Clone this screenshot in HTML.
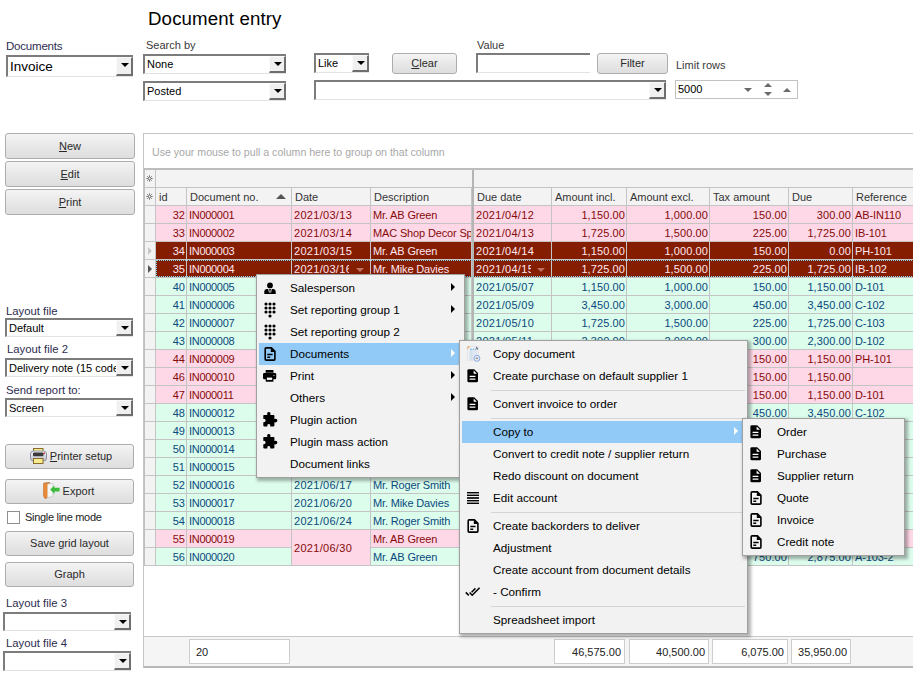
<!DOCTYPE html><html><head><meta charset="utf-8"><style>
*{margin:0;padding:0;box-sizing:border-box}
html,body{width:913px;height:675px;overflow:hidden;background:#fff;font-family:"Liberation Sans",sans-serif;position:relative}
.a{position:absolute;white-space:nowrap}
.lbl{position:absolute;white-space:nowrap;font-size:11px;color:#3a3a3a;line-height:13px}
.lblb{position:absolute;white-space:nowrap;font-size:11.3px;color:#2c2c50;line-height:14px}
.combo{position:absolute;background:#fff;border-top:2px solid #7c7c7c;border-left:2px solid #7c7c7c;border-bottom:1px solid #e3e3e3;border-right:0;font-size:11px;color:#000;padding-left:2px;overflow:hidden;white-space:nowrap}
.dd{position:absolute;top:0;right:0;width:17px;bottom:0;background:#f0f0f0;border-left:1px solid #fafafa;border-top:1px solid #fafafa;border-right:2px solid #6e6e6e;border-bottom:2px solid #6e6e6e}
.dd:after{content:"";position:absolute;left:4px;top:5px;border-left:4px solid transparent;border-right:4px solid transparent;border-top:4px solid #000}
.btn{position:absolute;border:1px solid #adadad;border-radius:3px;background:linear-gradient(#f4f4f4,#e8e8e8 50%,#dedede);font-size:11px;color:#2a2a2a;text-align:center;white-space:nowrap}
.g{position:absolute;overflow:hidden;white-space:nowrap;font-size:11px;line-height:20px;border-right:1px solid #c4c4c4;border-bottom:1px solid #c4c4c4;padding:0 1px 0 2px}
.r{text-align:right}
.menu{position:absolute;background:#f2f2f2;border:1px solid #a0a0a0;box-shadow:2px 2px 3px 1px rgba(0,0,0,0.30)}
.mi{position:absolute;height:22px;line-height:21px;font-size:11.7px;color:#000;white-space:nowrap}
.hl{position:absolute;background:#91c9f7}
.sep{position:absolute;height:1px;background:#d5d5d5}
.arr{position:absolute;border-top:4px solid transparent;border-bottom:4px solid transparent;border-left:4px solid #000}
u{text-decoration:underline}
</style></head><body>
<div class="a" style="left:148px;top:7.5px;font-size:18.7px;letter-spacing:0.12px;line-height:22px;color:#000">Document entry</div>
<div class="lblb" style="left:6px;top:39px;font-size:11.5px;letter-spacing:-0.2px">Documents</div>
<div class="combo" style="left:6px;top:55px;width:127px;height:22px;font-size:13.5px;line-height:20px">Invoice<div class="dd"></div></div>
<div class="lbl" style="left:146px;top:39px">Search by</div>
<div class="combo" style="left:143px;top:54px;width:143px;height:20px;font-size:11px;line-height:17px">None<div class="dd"></div></div>
<div class="combo" style="left:143px;top:81px;width:143px;height:20px;font-size:11px;line-height:17px">Posted<div class="dd"></div></div>
<div class="combo" style="left:314px;top:53px;width:55px;height:20px;font-size:11px;line-height:17px">Like<div class="dd"></div></div>
<div class="btn" style="left:392px;top:53px;width:65px;height:21px;line-height:19px"><u>C</u>lear</div>
<div class="lbl" style="left:477px;top:39px">Value</div>
<div class="combo" style="left:476px;top:53px;width:114px;height:20px"></div>
<div class="btn" style="left:597px;top:53px;width:71px;height:21px;line-height:19px">Filter</div>
<div class="combo" style="left:314px;top:80px;width:352px;height:20px;font-size:11px;line-height:17px"><div class="dd"></div></div>
<div class="lbl" style="left:676px;top:59px">Limit rows</div>
<div class="a" style="left:675px;top:80px;width:123px;height:19px;border:1px solid #c2c2c2;background:#fff;font-size:11px;line-height:17px;padding-left:2px">5000</div>
<div class="a" style="left:743.5px;top:87.5px;border-left:4px solid transparent;border-right:4px solid transparent;border-top:4px solid #6a6a6a"></div>
<div class="a" style="left:763.5px;top:83px;border-left:4px solid transparent;border-right:4px solid transparent;border-bottom:4px solid #6a6a6a"></div>
<div class="a" style="left:763.5px;top:91.5px;border-left:4px solid transparent;border-right:4px solid transparent;border-top:4px solid #6a6a6a"></div>
<div class="a" style="left:782.5px;top:87.5px;border-left:4px solid transparent;border-right:4px solid transparent;border-bottom:4px solid #6a6a6a"></div>
<div class="btn" style="left:5px;top:133px;width:130px;height:26px;line-height:24px"><u>N</u>ew</div>
<div class="btn" style="left:5px;top:161px;width:130px;height:26px;line-height:24px"><u>E</u>dit</div>
<div class="btn" style="left:5px;top:189px;width:130px;height:26px;line-height:24px"><u>P</u>rint</div>
<div class="lblb" style="left:6px;top:304px">Layout file</div>
<div class="combo" style="left:5px;top:318px;width:128px;height:19px;font-size:11px;line-height:16px">Default<div class="dd"></div></div>
<div class="lblb" style="left:7px;top:342px">Layout file 2</div>
<div class="combo" style="left:5px;top:358px;width:128px;height:19px;font-size:11px;line-height:16px">Delivery note (15 code<div class="dd"></div></div>
<div class="lblb" style="left:6px;top:383px">Send report to:</div>
<div class="combo" style="left:5px;top:398px;width:128px;height:19px;font-size:11px;line-height:16px">Screen<div class="dd"></div></div>
<div class="btn" style="left:5px;top:444px;width:129px;height:25px;line-height:23px"><span style="display:inline-block;width:23px"></span><u>P</u>rinter setup</div>
<svg class="a" style="left:30px;top:448px;" width="17" height="16" viewBox="0 0 17 16"><defs><linearGradient id="pg" x1="0" y1="0" x2="0" y2="1"><stop offset="0" stop-color="#f4f5f8"/><stop offset="1" stop-color="#b9bec8"/></linearGradient></defs><rect x="3.5" y="0.5" width="9.5" height="5" fill="#f5ec90" stroke="#8a6a2a" stroke-width="1"/><rect x="0.5" y="3" width="16" height="10" rx="3" fill="url(#pg)" stroke="#8d939e" stroke-width="1"/><rect x="3" y="4.6" width="10.5" height="3.6" rx="1" fill="#3a3a3a"/><circle cx="14.2" cy="5.4" r="0.8" fill="#d02020"/><rect x="3.5" y="10.5" width="9.5" height="5" fill="#f5ec90" stroke="#8a6a2a" stroke-width="1"/></svg>
<div class="btn" style="left:5px;top:479px;width:129px;height:25px;line-height:23px"><span style="display:inline-block;width:18px"></span>Export</div>
<svg class="a" style="left:43px;top:482px;" width="17" height="17" viewBox="0 0 17 17"><path d="M0.8 1.2 L6.5 0.6 L6.5 14 L2.2 16.6 L0.8 14 Z" fill="#e0822e" stroke="#b05a18" stroke-width="0.8"/><path d="M4.2 2 L10 1.4 L10 14.6 L4.2 15.6 Z" fill="#f6f6f2" stroke="#c0c0c0" stroke-width="0.7"/><path d="M0.8 1.2 L4.2 2 L4.2 15.6 L2.2 16.6 L0.8 14 Z" fill="#e88a36"/><path d="M7.2 7.6 L11.4 3.4 L11.4 5.8 L16.6 5.8 L16.6 9.6 L11.4 9.6 L11.4 12 Z" fill="#3dbb3d"/></svg>
<div class="a" style="left:7px;top:511px;width:13px;height:13px;border:1px solid #8f8f8f;background:#fff"></div>
<div class="a" style="left:25px;top:510px;font-size:11px;letter-spacing:-0.3px;line-height:14px;color:#222">Single line mode</div>
<div class="btn" style="left:5px;top:531px;width:129px;height:25px;line-height:23px">Save grid layout</div>
<div class="btn" style="left:5px;top:562px;width:129px;height:25px;line-height:23px">Graph</div>
<div class="lblb" style="left:6px;top:596px">Layout file 3</div>
<div class="combo" style="left:3px;top:612px;width:128px;height:19px;font-size:11px;line-height:16px"><div class="dd"></div></div>
<div class="lblb" style="left:6px;top:636px">Layout file 4</div>
<div class="combo" style="left:3px;top:651px;width:128px;height:20px;font-size:11px;line-height:17px"><div class="dd"></div></div>
<div class="a" style="left:143px;top:133px;width:780px;height:535px;border:1px solid #c4c4c4;background:#fff"></div>
<div class="a" style="left:152px;top:146px;font-size:10.6px;line-height:13px;color:#a8a8a8">Use your mouse to pull a column here to group on that column</div>
<div class="a" style="left:144px;top:168px;width:780px;height:2px;background:#bdbdbd"></div>
<div class="a" style="left:144px;top:170px;width:780px;height:35px;background:#f3f3f3"></div>
<div class="a" style="left:144px;top:170px;width:12px;height:396px;background:#f3f3f3;border-right:1px solid #c4c4c4;border-left:1px solid #c0c0c0"></div>
<div class="a" style="left:145px;top:223px;width:10px;height:1px;background:#c4c4c4"></div>
<div class="a" style="left:145px;top:241px;width:10px;height:1px;background:#c4c4c4"></div>
<div class="a" style="left:145px;top:259px;width:10px;height:1px;background:#c4c4c4"></div>
<div class="a" style="left:145px;top:277px;width:10px;height:1px;background:#c4c4c4"></div>
<div class="a" style="left:145px;top:295px;width:10px;height:1px;background:#c4c4c4"></div>
<div class="a" style="left:145px;top:313px;width:10px;height:1px;background:#c4c4c4"></div>
<div class="a" style="left:145px;top:331px;width:10px;height:1px;background:#c4c4c4"></div>
<div class="a" style="left:145px;top:349px;width:10px;height:1px;background:#c4c4c4"></div>
<div class="a" style="left:145px;top:367px;width:10px;height:1px;background:#c4c4c4"></div>
<div class="a" style="left:145px;top:385px;width:10px;height:1px;background:#c4c4c4"></div>
<div class="a" style="left:145px;top:403px;width:10px;height:1px;background:#c4c4c4"></div>
<div class="a" style="left:145px;top:421px;width:10px;height:1px;background:#c4c4c4"></div>
<div class="a" style="left:145px;top:439px;width:10px;height:1px;background:#c4c4c4"></div>
<div class="a" style="left:145px;top:457px;width:10px;height:1px;background:#c4c4c4"></div>
<div class="a" style="left:145px;top:475px;width:10px;height:1px;background:#c4c4c4"></div>
<div class="a" style="left:145px;top:493px;width:10px;height:1px;background:#c4c4c4"></div>
<div class="a" style="left:145px;top:511px;width:10px;height:1px;background:#c4c4c4"></div>
<div class="a" style="left:145px;top:529px;width:10px;height:1px;background:#c4c4c4"></div>
<div class="a" style="left:145px;top:547px;width:10px;height:1px;background:#c4c4c4"></div>
<div class="a" style="left:145px;top:565px;width:10px;height:1px;background:#c4c4c4"></div>
<div class="a" style="left:144px;top:187px;width:780px;height:1px;background:#c4c4c4"></div>
<div class="a" style="left:144px;top:205px;width:780px;height:1px;background:#c4c4c4"></div>
<div class="a" style="left:472px;top:170px;width:2px;height:396px;background:#b4b4b4"></div>
<div class="a" style="left:186px;top:188px;width:1px;height:18px;background:#c4c4c4"></div>
<div class="a" style="left:159px;top:190px;font-size:11px;line-height:14px;color:#333">id</div>
<div class="a" style="left:291px;top:188px;width:1px;height:18px;background:#c4c4c4"></div>
<div class="a" style="left:190px;top:190px;font-size:11px;line-height:14px;color:#333">Document no.</div>
<div class="a" style="left:370px;top:188px;width:1px;height:18px;background:#c4c4c4"></div>
<div class="a" style="left:295px;top:190px;font-size:11px;line-height:14px;color:#333">Date</div>
<div class="a" style="left:471px;top:188px;width:1px;height:18px;background:#c4c4c4"></div>
<div class="a" style="left:374px;top:190px;font-size:11px;line-height:14px;color:#333">Description</div>
<div class="a" style="left:551px;top:188px;width:1px;height:18px;background:#c4c4c4"></div>
<div class="a" style="left:477px;top:190px;font-size:11px;line-height:14px;color:#333">Due date</div>
<div class="a" style="left:626px;top:188px;width:1px;height:18px;background:#c4c4c4"></div>
<div class="a" style="left:555px;top:190px;font-size:11px;line-height:14px;color:#333">Amount incl.</div>
<div class="a" style="left:709px;top:188px;width:1px;height:18px;background:#c4c4c4"></div>
<div class="a" style="left:630px;top:190px;font-size:11px;line-height:14px;color:#333">Amount excl.</div>
<div class="a" style="left:788px;top:188px;width:1px;height:18px;background:#c4c4c4"></div>
<div class="a" style="left:713px;top:190px;font-size:11px;line-height:14px;color:#333">Tax amount</div>
<div class="a" style="left:852px;top:188px;width:1px;height:18px;background:#c4c4c4"></div>
<div class="a" style="left:792px;top:190px;font-size:11px;line-height:14px;color:#333">Due</div>
<div class="a" style="left:959px;top:188px;width:1px;height:18px;background:#c4c4c4"></div>
<div class="a" style="left:856px;top:190px;font-size:11px;line-height:14px;color:#333">Reference</div>
<div class="a" style="left:276px;top:194px;border-left:5px solid transparent;border-right:5px solid transparent;border-bottom:5px solid #555"></div>
<svg class="a" style="left:146px;top:175px;" width="7" height="7" viewBox="0 0 7 7"><path d="M3.5 0.3 L3.5 6.7 M0.3 3.5 L6.7 3.5 M1.2 1.2 L5.8 5.8 M5.8 1.2 L1.2 5.8" stroke="#6a6a6a" stroke-width="0.9"/><circle cx="3.5" cy="3.5" r="1" fill="#f3f3f3"/></svg>
<svg class="a" style="left:146px;top:193px;" width="7" height="7" viewBox="0 0 7 7"><path d="M3.5 0.3 L3.5 6.7 M0.3 3.5 L6.7 3.5 M1.2 1.2 L5.8 5.8 M5.8 1.2 L1.2 5.8" stroke="#6a6a6a" stroke-width="0.9"/><circle cx="3.5" cy="3.5" r="1" fill="#f3f3f3"/></svg>
<div class="g r" style="left:156px;top:206px;width:31px;height:18px;background:#ffd8e7;color:#850a0a;line-height:18px;letter-spacing:0px">32</div>
<div class="g" style="left:187px;top:206px;width:105px;height:18px;background:#ffd8e7;color:#850a0a;line-height:18px;letter-spacing:-0.3px">IN000001</div>
<div class="g" style="left:292px;top:206px;width:79px;height:18px;background:#ffd8e7;color:#850a0a;line-height:18px;letter-spacing:0.3px">2021/03/13</div>
<div class="g" style="left:371px;top:206px;width:101px;height:18px;background:#ffd8e7;color:#850a0a;line-height:18px;letter-spacing:-0.15px">Mr. AB Green</div>
<div class="g" style="left:474px;top:206px;width:78px;height:18px;background:#ffd8e7;color:#850a0a;line-height:18px;letter-spacing:0.3px">2021/04/12</div>
<div class="g r" style="left:552px;top:206px;width:75px;height:18px;background:#ffd8e7;color:#850a0a;line-height:18px;letter-spacing:0.1px">1,150.00</div>
<div class="g r" style="left:627px;top:206px;width:83px;height:18px;background:#ffd8e7;color:#850a0a;line-height:18px;letter-spacing:0.1px">1,000.00</div>
<div class="g r" style="left:710px;top:206px;width:79px;height:18px;background:#ffd8e7;color:#850a0a;line-height:18px;letter-spacing:0.1px">150.00</div>
<div class="g r" style="left:789px;top:206px;width:64px;height:18px;background:#ffd8e7;color:#850a0a;line-height:18px;letter-spacing:0.1px">300.00</div>
<div class="g" style="left:853px;top:206px;width:107px;height:18px;background:#ffd8e7;color:#850a0a;line-height:18px;letter-spacing:-0.1px">AB-IN110</div>
<div class="g r" style="left:156px;top:224px;width:31px;height:18px;background:#ffd8e7;color:#850a0a;line-height:18px;letter-spacing:0px">33</div>
<div class="g" style="left:187px;top:224px;width:105px;height:18px;background:#ffd8e7;color:#850a0a;line-height:18px;letter-spacing:-0.3px">IN000002</div>
<div class="g" style="left:292px;top:224px;width:79px;height:18px;background:#ffd8e7;color:#850a0a;line-height:18px;letter-spacing:0.3px">2021/03/14</div>
<div class="g" style="left:371px;top:224px;width:101px;height:18px;background:#ffd8e7;color:#850a0a;line-height:18px;letter-spacing:-0.15px">MAC Shop Decor Sp</div>
<div class="g" style="left:474px;top:224px;width:78px;height:18px;background:#ffd8e7;color:#850a0a;line-height:18px;letter-spacing:0.3px">2021/04/13</div>
<div class="g r" style="left:552px;top:224px;width:75px;height:18px;background:#ffd8e7;color:#850a0a;line-height:18px;letter-spacing:0.1px">1,725.00</div>
<div class="g r" style="left:627px;top:224px;width:83px;height:18px;background:#ffd8e7;color:#850a0a;line-height:18px;letter-spacing:0.1px">1,500.00</div>
<div class="g r" style="left:710px;top:224px;width:79px;height:18px;background:#ffd8e7;color:#850a0a;line-height:18px;letter-spacing:0.1px">225.00</div>
<div class="g r" style="left:789px;top:224px;width:64px;height:18px;background:#ffd8e7;color:#850a0a;line-height:18px;letter-spacing:0.1px">1,725.00</div>
<div class="g" style="left:853px;top:224px;width:107px;height:18px;background:#ffd8e7;color:#850a0a;line-height:18px;letter-spacing:-0.1px">IB-101</div>
<div class="g r" style="left:156px;top:242px;width:31px;height:18px;background:#851d00;color:#ffe6f2;line-height:18px;letter-spacing:0px">34</div>
<div class="g" style="left:187px;top:242px;width:105px;height:18px;background:#851d00;color:#ffe6f2;line-height:18px;letter-spacing:-0.3px">IN000003</div>
<div class="g" style="left:292px;top:242px;width:79px;height:18px;background:#851d00;color:#ffe6f2;line-height:18px;letter-spacing:0.3px">2021/03/15</div>
<div class="g" style="left:371px;top:242px;width:101px;height:18px;background:#851d00;color:#ffe6f2;line-height:18px;letter-spacing:-0.15px">Mr. AB Green</div>
<div class="g" style="left:474px;top:242px;width:78px;height:18px;background:#851d00;color:#ffe6f2;line-height:18px;letter-spacing:0.3px">2021/04/14</div>
<div class="g r" style="left:552px;top:242px;width:75px;height:18px;background:#851d00;color:#ffe6f2;line-height:18px;letter-spacing:0.1px">1,150.00</div>
<div class="g r" style="left:627px;top:242px;width:83px;height:18px;background:#851d00;color:#ffe6f2;line-height:18px;letter-spacing:0.1px">1,000.00</div>
<div class="g r" style="left:710px;top:242px;width:79px;height:18px;background:#851d00;color:#ffe6f2;line-height:18px;letter-spacing:0.1px">150.00</div>
<div class="g r" style="left:789px;top:242px;width:64px;height:18px;background:#851d00;color:#ffe6f2;line-height:18px;letter-spacing:0.1px">0.00</div>
<div class="g" style="left:853px;top:242px;width:107px;height:18px;background:#851d00;color:#ffe6f2;line-height:18px;letter-spacing:-0.1px">PH-101</div>
<div class="g r" style="left:156px;top:260px;width:31px;height:18px;background:#851d00;color:#ffe6f2;line-height:18px;letter-spacing:0px">35</div>
<div class="g" style="left:187px;top:260px;width:105px;height:18px;background:#851d00;color:#ffe6f2;line-height:18px;letter-spacing:-0.3px">IN000004</div>
<div class="g" style="left:292px;top:260px;width:79px;height:18px;background:#851d00;color:#ffe6f2;line-height:18px;letter-spacing:0.3px"><span style="display:inline-block;width:55px;overflow:hidden;vertical-align:top">2021/03/16</span></div>
<div class="g" style="left:371px;top:260px;width:101px;height:18px;background:#851d00;color:#ffe6f2;line-height:18px;letter-spacing:-0.15px">Mr. Mike Davies</div>
<div class="g" style="left:474px;top:260px;width:78px;height:18px;background:#851d00;color:#ffe6f2;line-height:18px;letter-spacing:0.3px"><span style="display:inline-block;width:55px;overflow:hidden;vertical-align:top">2021/04/15</span></div>
<div class="g r" style="left:552px;top:260px;width:75px;height:18px;background:#851d00;color:#ffe6f2;line-height:18px;letter-spacing:0.1px">1,725.00</div>
<div class="g r" style="left:627px;top:260px;width:83px;height:18px;background:#851d00;color:#ffe6f2;line-height:18px;letter-spacing:0.1px">1,500.00</div>
<div class="g r" style="left:710px;top:260px;width:79px;height:18px;background:#851d00;color:#ffe6f2;line-height:18px;letter-spacing:0.1px">225.00</div>
<div class="g r" style="left:789px;top:260px;width:64px;height:18px;background:#851d00;color:#ffe6f2;line-height:18px;letter-spacing:0.1px">1,725.00</div>
<div class="g" style="left:853px;top:260px;width:107px;height:18px;background:#851d00;color:#ffe6f2;line-height:18px;letter-spacing:-0.1px">IB-102</div>
<div class="g r" style="left:156px;top:278px;width:31px;height:18px;background:#dcfcec;color:#0a4a7c;line-height:18px;letter-spacing:0px">40</div>
<div class="g" style="left:187px;top:278px;width:105px;height:18px;background:#dcfcec;color:#0a4a7c;line-height:18px;letter-spacing:-0.3px">IN000005</div>
<div class="g" style="left:292px;top:278px;width:79px;height:18px;background:#dcfcec;color:#0a4a7c;line-height:18px;letter-spacing:0.3px">2021/04/07</div>
<div class="g" style="left:371px;top:278px;width:101px;height:18px;background:#dcfcec;color:#0a4a7c;line-height:18px;letter-spacing:-0.15px">Mr. AB Green</div>
<div class="g" style="left:474px;top:278px;width:78px;height:18px;background:#dcfcec;color:#0a4a7c;line-height:18px;letter-spacing:0.3px">2021/05/07</div>
<div class="g r" style="left:552px;top:278px;width:75px;height:18px;background:#dcfcec;color:#0a4a7c;line-height:18px;letter-spacing:0.1px">1,150.00</div>
<div class="g r" style="left:627px;top:278px;width:83px;height:18px;background:#dcfcec;color:#0a4a7c;line-height:18px;letter-spacing:0.1px">1,000.00</div>
<div class="g r" style="left:710px;top:278px;width:79px;height:18px;background:#dcfcec;color:#0a4a7c;line-height:18px;letter-spacing:0.1px">150.00</div>
<div class="g r" style="left:789px;top:278px;width:64px;height:18px;background:#dcfcec;color:#0a4a7c;line-height:18px;letter-spacing:0.1px">1,150.00</div>
<div class="g" style="left:853px;top:278px;width:107px;height:18px;background:#dcfcec;color:#0a4a7c;line-height:18px;letter-spacing:-0.1px">D-101</div>
<div class="g r" style="left:156px;top:296px;width:31px;height:18px;background:#dcfcec;color:#0a4a7c;line-height:18px;letter-spacing:0px">41</div>
<div class="g" style="left:187px;top:296px;width:105px;height:18px;background:#dcfcec;color:#0a4a7c;line-height:18px;letter-spacing:-0.3px">IN000006</div>
<div class="g" style="left:292px;top:296px;width:79px;height:18px;background:#dcfcec;color:#0a4a7c;line-height:18px;letter-spacing:0.3px">2021/04/09</div>
<div class="g" style="left:371px;top:296px;width:101px;height:18px;background:#dcfcec;color:#0a4a7c;line-height:18px;letter-spacing:-0.15px">Mr. AB Green</div>
<div class="g" style="left:474px;top:296px;width:78px;height:18px;background:#dcfcec;color:#0a4a7c;line-height:18px;letter-spacing:0.3px">2021/05/09</div>
<div class="g r" style="left:552px;top:296px;width:75px;height:18px;background:#dcfcec;color:#0a4a7c;line-height:18px;letter-spacing:0.1px">3,450.00</div>
<div class="g r" style="left:627px;top:296px;width:83px;height:18px;background:#dcfcec;color:#0a4a7c;line-height:18px;letter-spacing:0.1px">3,000.00</div>
<div class="g r" style="left:710px;top:296px;width:79px;height:18px;background:#dcfcec;color:#0a4a7c;line-height:18px;letter-spacing:0.1px">450.00</div>
<div class="g r" style="left:789px;top:296px;width:64px;height:18px;background:#dcfcec;color:#0a4a7c;line-height:18px;letter-spacing:0.1px">3,450.00</div>
<div class="g" style="left:853px;top:296px;width:107px;height:18px;background:#dcfcec;color:#0a4a7c;line-height:18px;letter-spacing:-0.1px">C-102</div>
<div class="g r" style="left:156px;top:314px;width:31px;height:18px;background:#dcfcec;color:#0a4a7c;line-height:18px;letter-spacing:0px">42</div>
<div class="g" style="left:187px;top:314px;width:105px;height:18px;background:#dcfcec;color:#0a4a7c;line-height:18px;letter-spacing:-0.3px">IN000007</div>
<div class="g" style="left:292px;top:314px;width:79px;height:18px;background:#dcfcec;color:#0a4a7c;line-height:18px;letter-spacing:0.3px">2021/04/10</div>
<div class="g" style="left:371px;top:314px;width:101px;height:18px;background:#dcfcec;color:#0a4a7c;line-height:18px;letter-spacing:-0.15px">Mr. AB Green</div>
<div class="g" style="left:474px;top:314px;width:78px;height:18px;background:#dcfcec;color:#0a4a7c;line-height:18px;letter-spacing:0.3px">2021/05/10</div>
<div class="g r" style="left:552px;top:314px;width:75px;height:18px;background:#dcfcec;color:#0a4a7c;line-height:18px;letter-spacing:0.1px">1,725.00</div>
<div class="g r" style="left:627px;top:314px;width:83px;height:18px;background:#dcfcec;color:#0a4a7c;line-height:18px;letter-spacing:0.1px">1,500.00</div>
<div class="g r" style="left:710px;top:314px;width:79px;height:18px;background:#dcfcec;color:#0a4a7c;line-height:18px;letter-spacing:0.1px">225.00</div>
<div class="g r" style="left:789px;top:314px;width:64px;height:18px;background:#dcfcec;color:#0a4a7c;line-height:18px;letter-spacing:0.1px">1,725.00</div>
<div class="g" style="left:853px;top:314px;width:107px;height:18px;background:#dcfcec;color:#0a4a7c;line-height:18px;letter-spacing:-0.1px">C-103</div>
<div class="g r" style="left:156px;top:332px;width:31px;height:18px;background:#dcfcec;color:#0a4a7c;line-height:18px;letter-spacing:0px">43</div>
<div class="g" style="left:187px;top:332px;width:105px;height:18px;background:#dcfcec;color:#0a4a7c;line-height:18px;letter-spacing:-0.3px">IN000008</div>
<div class="g" style="left:292px;top:332px;width:79px;height:18px;background:#dcfcec;color:#0a4a7c;line-height:18px;letter-spacing:0.3px">2021/04/11</div>
<div class="g" style="left:371px;top:332px;width:101px;height:18px;background:#dcfcec;color:#0a4a7c;line-height:18px;letter-spacing:-0.15px">Mr. AB Green</div>
<div class="g" style="left:474px;top:332px;width:78px;height:18px;background:#dcfcec;color:#0a4a7c;line-height:18px;letter-spacing:0.3px">2021/05/11</div>
<div class="g r" style="left:552px;top:332px;width:75px;height:18px;background:#dcfcec;color:#0a4a7c;line-height:18px;letter-spacing:0.1px">2,300.00</div>
<div class="g r" style="left:627px;top:332px;width:83px;height:18px;background:#dcfcec;color:#0a4a7c;line-height:18px;letter-spacing:0.1px">2,000.00</div>
<div class="g r" style="left:710px;top:332px;width:79px;height:18px;background:#dcfcec;color:#0a4a7c;line-height:18px;letter-spacing:0.1px">300.00</div>
<div class="g r" style="left:789px;top:332px;width:64px;height:18px;background:#dcfcec;color:#0a4a7c;line-height:18px;letter-spacing:0.1px">2,300.00</div>
<div class="g" style="left:853px;top:332px;width:107px;height:18px;background:#dcfcec;color:#0a4a7c;line-height:18px;letter-spacing:-0.1px">D-102</div>
<div class="g r" style="left:156px;top:350px;width:31px;height:18px;background:#ffd8e7;color:#850a0a;line-height:18px;letter-spacing:0px">44</div>
<div class="g" style="left:187px;top:350px;width:105px;height:18px;background:#ffd8e7;color:#850a0a;line-height:18px;letter-spacing:-0.3px">IN000009</div>
<div class="g" style="left:292px;top:350px;width:79px;height:18px;background:#ffd8e7;color:#850a0a;line-height:18px;letter-spacing:0.3px">2021/04/12</div>
<div class="g" style="left:371px;top:350px;width:101px;height:18px;background:#ffd8e7;color:#850a0a;line-height:18px;letter-spacing:-0.15px">Mr. AB Green</div>
<div class="g" style="left:474px;top:350px;width:78px;height:18px;background:#ffd8e7;color:#850a0a;line-height:18px;letter-spacing:0.3px">2021/05/12</div>
<div class="g r" style="left:552px;top:350px;width:75px;height:18px;background:#ffd8e7;color:#850a0a;line-height:18px;letter-spacing:0.1px">1,150.00</div>
<div class="g r" style="left:627px;top:350px;width:83px;height:18px;background:#ffd8e7;color:#850a0a;line-height:18px;letter-spacing:0.1px">1,000.00</div>
<div class="g r" style="left:710px;top:350px;width:79px;height:18px;background:#ffd8e7;color:#850a0a;line-height:18px;letter-spacing:0.1px">150.00</div>
<div class="g r" style="left:789px;top:350px;width:64px;height:18px;background:#ffd8e7;color:#850a0a;line-height:18px;letter-spacing:0.1px">1,150.00</div>
<div class="g" style="left:853px;top:350px;width:107px;height:18px;background:#ffd8e7;color:#850a0a;line-height:18px;letter-spacing:-0.1px">PH-101</div>
<div class="g r" style="left:156px;top:368px;width:31px;height:18px;background:#ffd8e7;color:#850a0a;line-height:18px;letter-spacing:0px">46</div>
<div class="g" style="left:187px;top:368px;width:105px;height:18px;background:#ffd8e7;color:#850a0a;line-height:18px;letter-spacing:-0.3px">IN000010</div>
<div class="g" style="left:292px;top:368px;width:79px;height:18px;background:#ffd8e7;color:#850a0a;line-height:18px;letter-spacing:0.3px">2021/04/13</div>
<div class="g" style="left:371px;top:368px;width:101px;height:18px;background:#ffd8e7;color:#850a0a;line-height:18px;letter-spacing:-0.15px">Mr. AB Green</div>
<div class="g" style="left:474px;top:368px;width:78px;height:18px;background:#ffd8e7;color:#850a0a;line-height:18px;letter-spacing:0.3px">2021/05/13</div>
<div class="g r" style="left:552px;top:368px;width:75px;height:18px;background:#ffd8e7;color:#850a0a;line-height:18px;letter-spacing:0.1px">1,150.00</div>
<div class="g r" style="left:627px;top:368px;width:83px;height:18px;background:#ffd8e7;color:#850a0a;line-height:18px;letter-spacing:0.1px">1,000.00</div>
<div class="g r" style="left:710px;top:368px;width:79px;height:18px;background:#ffd8e7;color:#850a0a;line-height:18px;letter-spacing:0.1px">150.00</div>
<div class="g r" style="left:789px;top:368px;width:64px;height:18px;background:#ffd8e7;color:#850a0a;line-height:18px;letter-spacing:0.1px">1,150.00</div>
<div class="g" style="left:853px;top:368px;width:107px;height:18px;background:#ffd8e7;color:#850a0a;line-height:18px;letter-spacing:-0.1px"></div>
<div class="g r" style="left:156px;top:386px;width:31px;height:18px;background:#ffd8e7;color:#850a0a;line-height:18px;letter-spacing:0px">47</div>
<div class="g" style="left:187px;top:386px;width:105px;height:18px;background:#ffd8e7;color:#850a0a;line-height:18px;letter-spacing:-0.3px">IN000011</div>
<div class="g" style="left:292px;top:386px;width:79px;height:18px;background:#ffd8e7;color:#850a0a;line-height:18px;letter-spacing:0.3px">2021/04/14</div>
<div class="g" style="left:371px;top:386px;width:101px;height:18px;background:#ffd8e7;color:#850a0a;line-height:18px;letter-spacing:-0.15px">Mr. AB Green</div>
<div class="g" style="left:474px;top:386px;width:78px;height:18px;background:#ffd8e7;color:#850a0a;line-height:18px;letter-spacing:0.3px">2021/05/14</div>
<div class="g r" style="left:552px;top:386px;width:75px;height:18px;background:#ffd8e7;color:#850a0a;line-height:18px;letter-spacing:0.1px">1,150.00</div>
<div class="g r" style="left:627px;top:386px;width:83px;height:18px;background:#ffd8e7;color:#850a0a;line-height:18px;letter-spacing:0.1px">1,000.00</div>
<div class="g r" style="left:710px;top:386px;width:79px;height:18px;background:#ffd8e7;color:#850a0a;line-height:18px;letter-spacing:0.1px">150.00</div>
<div class="g r" style="left:789px;top:386px;width:64px;height:18px;background:#ffd8e7;color:#850a0a;line-height:18px;letter-spacing:0.1px">1,150.00</div>
<div class="g" style="left:853px;top:386px;width:107px;height:18px;background:#ffd8e7;color:#850a0a;line-height:18px;letter-spacing:-0.1px">D-101</div>
<div class="g r" style="left:156px;top:404px;width:31px;height:18px;background:#dcfcec;color:#0a4a7c;line-height:18px;letter-spacing:0px">48</div>
<div class="g" style="left:187px;top:404px;width:105px;height:18px;background:#dcfcec;color:#0a4a7c;line-height:18px;letter-spacing:-0.3px">IN000012</div>
<div class="g" style="left:292px;top:404px;width:79px;height:18px;background:#dcfcec;color:#0a4a7c;line-height:18px;letter-spacing:0.3px">2021/04/15</div>
<div class="g" style="left:371px;top:404px;width:101px;height:18px;background:#dcfcec;color:#0a4a7c;line-height:18px;letter-spacing:-0.15px">Mr. AB Green</div>
<div class="g" style="left:474px;top:404px;width:78px;height:18px;background:#dcfcec;color:#0a4a7c;line-height:18px;letter-spacing:0.3px">2021/05/15</div>
<div class="g r" style="left:552px;top:404px;width:75px;height:18px;background:#dcfcec;color:#0a4a7c;line-height:18px;letter-spacing:0.1px">3,450.00</div>
<div class="g r" style="left:627px;top:404px;width:83px;height:18px;background:#dcfcec;color:#0a4a7c;line-height:18px;letter-spacing:0.1px">3,000.00</div>
<div class="g r" style="left:710px;top:404px;width:79px;height:18px;background:#dcfcec;color:#0a4a7c;line-height:18px;letter-spacing:0.1px">450.00</div>
<div class="g r" style="left:789px;top:404px;width:64px;height:18px;background:#dcfcec;color:#0a4a7c;line-height:18px;letter-spacing:0.1px">3,450.00</div>
<div class="g" style="left:853px;top:404px;width:107px;height:18px;background:#dcfcec;color:#0a4a7c;line-height:18px;letter-spacing:-0.1px">C-102</div>
<div class="g r" style="left:156px;top:422px;width:31px;height:18px;background:#dcfcec;color:#0a4a7c;line-height:18px;letter-spacing:0px">49</div>
<div class="g" style="left:187px;top:422px;width:105px;height:18px;background:#dcfcec;color:#0a4a7c;line-height:18px;letter-spacing:-0.3px">IN000013</div>
<div class="g" style="left:292px;top:422px;width:79px;height:18px;background:#dcfcec;color:#0a4a7c;line-height:18px;letter-spacing:0.3px">2021/05/16</div>
<div class="g" style="left:371px;top:422px;width:101px;height:18px;background:#dcfcec;color:#0a4a7c;line-height:18px;letter-spacing:-0.15px">Mr. AB Green</div>
<div class="g" style="left:474px;top:422px;width:78px;height:18px;background:#dcfcec;color:#0a4a7c;line-height:18px;letter-spacing:0.3px">2021/06/16</div>
<div class="g r" style="left:552px;top:422px;width:75px;height:18px;background:#dcfcec;color:#0a4a7c;line-height:18px;letter-spacing:0.1px">1,150.00</div>
<div class="g r" style="left:627px;top:422px;width:83px;height:18px;background:#dcfcec;color:#0a4a7c;line-height:18px;letter-spacing:0.1px">1,000.00</div>
<div class="g r" style="left:710px;top:422px;width:79px;height:18px;background:#dcfcec;color:#0a4a7c;line-height:18px;letter-spacing:0.1px">150.00</div>
<div class="g r" style="left:789px;top:422px;width:64px;height:18px;background:#dcfcec;color:#0a4a7c;line-height:18px;letter-spacing:0.1px">1,150.00</div>
<div class="g" style="left:853px;top:422px;width:107px;height:18px;background:#dcfcec;color:#0a4a7c;line-height:18px;letter-spacing:-0.1px">D-101</div>
<div class="g r" style="left:156px;top:440px;width:31px;height:18px;background:#dcfcec;color:#0a4a7c;line-height:18px;letter-spacing:0px">50</div>
<div class="g" style="left:187px;top:440px;width:105px;height:18px;background:#dcfcec;color:#0a4a7c;line-height:18px;letter-spacing:-0.3px">IN000014</div>
<div class="g" style="left:292px;top:440px;width:79px;height:18px;background:#dcfcec;color:#0a4a7c;line-height:18px;letter-spacing:0.3px">2021/05/17</div>
<div class="g" style="left:371px;top:440px;width:101px;height:18px;background:#dcfcec;color:#0a4a7c;line-height:18px;letter-spacing:-0.15px">Mr. AB Green</div>
<div class="g" style="left:474px;top:440px;width:78px;height:18px;background:#dcfcec;color:#0a4a7c;line-height:18px;letter-spacing:0.3px">2021/06/17</div>
<div class="g r" style="left:552px;top:440px;width:75px;height:18px;background:#dcfcec;color:#0a4a7c;line-height:18px;letter-spacing:0.1px">1,150.00</div>
<div class="g r" style="left:627px;top:440px;width:83px;height:18px;background:#dcfcec;color:#0a4a7c;line-height:18px;letter-spacing:0.1px">1,000.00</div>
<div class="g r" style="left:710px;top:440px;width:79px;height:18px;background:#dcfcec;color:#0a4a7c;line-height:18px;letter-spacing:0.1px">150.00</div>
<div class="g r" style="left:789px;top:440px;width:64px;height:18px;background:#dcfcec;color:#0a4a7c;line-height:18px;letter-spacing:0.1px">1,150.00</div>
<div class="g" style="left:853px;top:440px;width:107px;height:18px;background:#dcfcec;color:#0a4a7c;line-height:18px;letter-spacing:-0.1px">D-101</div>
<div class="g r" style="left:156px;top:458px;width:31px;height:18px;background:#dcfcec;color:#0a4a7c;line-height:18px;letter-spacing:0px">51</div>
<div class="g" style="left:187px;top:458px;width:105px;height:18px;background:#dcfcec;color:#0a4a7c;line-height:18px;letter-spacing:-0.3px">IN000015</div>
<div class="g" style="left:292px;top:458px;width:79px;height:18px;background:#dcfcec;color:#0a4a7c;line-height:18px;letter-spacing:0.3px">2021/05/18</div>
<div class="g" style="left:371px;top:458px;width:101px;height:18px;background:#dcfcec;color:#0a4a7c;line-height:18px;letter-spacing:-0.15px">Mr. AB Green</div>
<div class="g" style="left:474px;top:458px;width:78px;height:18px;background:#dcfcec;color:#0a4a7c;line-height:18px;letter-spacing:0.3px">2021/06/18</div>
<div class="g r" style="left:552px;top:458px;width:75px;height:18px;background:#dcfcec;color:#0a4a7c;line-height:18px;letter-spacing:0.1px">1,150.00</div>
<div class="g r" style="left:627px;top:458px;width:83px;height:18px;background:#dcfcec;color:#0a4a7c;line-height:18px;letter-spacing:0.1px">1,000.00</div>
<div class="g r" style="left:710px;top:458px;width:79px;height:18px;background:#dcfcec;color:#0a4a7c;line-height:18px;letter-spacing:0.1px">150.00</div>
<div class="g r" style="left:789px;top:458px;width:64px;height:18px;background:#dcfcec;color:#0a4a7c;line-height:18px;letter-spacing:0.1px">1,150.00</div>
<div class="g" style="left:853px;top:458px;width:107px;height:18px;background:#dcfcec;color:#0a4a7c;line-height:18px;letter-spacing:-0.1px">D-101</div>
<div class="g r" style="left:156px;top:476px;width:31px;height:18px;background:#dcfcec;color:#0a4a7c;line-height:18px;letter-spacing:0px">52</div>
<div class="g" style="left:187px;top:476px;width:105px;height:18px;background:#dcfcec;color:#0a4a7c;line-height:18px;letter-spacing:-0.3px">IN000016</div>
<div class="g" style="left:292px;top:476px;width:79px;height:18px;background:#dcfcec;color:#0a4a7c;line-height:18px;letter-spacing:0.3px">2021/06/17</div>
<div class="g" style="left:371px;top:476px;width:101px;height:18px;background:#dcfcec;color:#0a4a7c;line-height:18px;letter-spacing:-0.15px">Mr. Roger Smith</div>
<div class="g" style="left:474px;top:476px;width:78px;height:18px;background:#dcfcec;color:#0a4a7c;line-height:18px;letter-spacing:0.3px">2021/07/17</div>
<div class="g r" style="left:552px;top:476px;width:75px;height:18px;background:#dcfcec;color:#0a4a7c;line-height:18px;letter-spacing:0.1px">1,150.00</div>
<div class="g r" style="left:627px;top:476px;width:83px;height:18px;background:#dcfcec;color:#0a4a7c;line-height:18px;letter-spacing:0.1px">1,000.00</div>
<div class="g r" style="left:710px;top:476px;width:79px;height:18px;background:#dcfcec;color:#0a4a7c;line-height:18px;letter-spacing:0.1px">150.00</div>
<div class="g r" style="left:789px;top:476px;width:64px;height:18px;background:#dcfcec;color:#0a4a7c;line-height:18px;letter-spacing:0.1px">1,150.00</div>
<div class="g" style="left:853px;top:476px;width:107px;height:18px;background:#dcfcec;color:#0a4a7c;line-height:18px;letter-spacing:-0.1px">D-101</div>
<div class="g r" style="left:156px;top:494px;width:31px;height:18px;background:#dcfcec;color:#0a4a7c;line-height:18px;letter-spacing:0px">53</div>
<div class="g" style="left:187px;top:494px;width:105px;height:18px;background:#dcfcec;color:#0a4a7c;line-height:18px;letter-spacing:-0.3px">IN000017</div>
<div class="g" style="left:292px;top:494px;width:79px;height:18px;background:#dcfcec;color:#0a4a7c;line-height:18px;letter-spacing:0.3px">2021/06/20</div>
<div class="g" style="left:371px;top:494px;width:101px;height:18px;background:#dcfcec;color:#0a4a7c;line-height:18px;letter-spacing:-0.15px">Mr. Mike Davies</div>
<div class="g" style="left:474px;top:494px;width:78px;height:18px;background:#dcfcec;color:#0a4a7c;line-height:18px;letter-spacing:0.3px">2021/07/20</div>
<div class="g r" style="left:552px;top:494px;width:75px;height:18px;background:#dcfcec;color:#0a4a7c;line-height:18px;letter-spacing:0.1px">1,150.00</div>
<div class="g r" style="left:627px;top:494px;width:83px;height:18px;background:#dcfcec;color:#0a4a7c;line-height:18px;letter-spacing:0.1px">1,000.00</div>
<div class="g r" style="left:710px;top:494px;width:79px;height:18px;background:#dcfcec;color:#0a4a7c;line-height:18px;letter-spacing:0.1px">150.00</div>
<div class="g r" style="left:789px;top:494px;width:64px;height:18px;background:#dcfcec;color:#0a4a7c;line-height:18px;letter-spacing:0.1px">1,150.00</div>
<div class="g" style="left:853px;top:494px;width:107px;height:18px;background:#dcfcec;color:#0a4a7c;line-height:18px;letter-spacing:-0.1px">D-101</div>
<div class="g r" style="left:156px;top:512px;width:31px;height:18px;background:#dcfcec;color:#0a4a7c;line-height:18px;letter-spacing:0px">54</div>
<div class="g" style="left:187px;top:512px;width:105px;height:18px;background:#dcfcec;color:#0a4a7c;line-height:18px;letter-spacing:-0.3px">IN000018</div>
<div class="g" style="left:292px;top:512px;width:79px;height:18px;background:#dcfcec;color:#0a4a7c;line-height:18px;letter-spacing:0.3px">2021/06/24</div>
<div class="g" style="left:371px;top:512px;width:101px;height:18px;background:#dcfcec;color:#0a4a7c;line-height:18px;letter-spacing:-0.15px">Mr. Roger Smith</div>
<div class="g" style="left:474px;top:512px;width:78px;height:18px;background:#dcfcec;color:#0a4a7c;line-height:18px;letter-spacing:0.3px">2021/07/24</div>
<div class="g r" style="left:552px;top:512px;width:75px;height:18px;background:#dcfcec;color:#0a4a7c;line-height:18px;letter-spacing:0.1px">1,150.00</div>
<div class="g r" style="left:627px;top:512px;width:83px;height:18px;background:#dcfcec;color:#0a4a7c;line-height:18px;letter-spacing:0.1px">1,000.00</div>
<div class="g r" style="left:710px;top:512px;width:79px;height:18px;background:#dcfcec;color:#0a4a7c;line-height:18px;letter-spacing:0.1px">150.00</div>
<div class="g r" style="left:789px;top:512px;width:64px;height:18px;background:#dcfcec;color:#0a4a7c;line-height:18px;letter-spacing:0.1px">1,150.00</div>
<div class="g" style="left:853px;top:512px;width:107px;height:18px;background:#dcfcec;color:#0a4a7c;line-height:18px;letter-spacing:-0.1px">D-101</div>
<div class="g r" style="left:156px;top:530px;width:31px;height:18px;background:#ffd8e7;color:#850a0a;line-height:18px;letter-spacing:0px">55</div>
<div class="g" style="left:187px;top:530px;width:105px;height:18px;background:#ffd8e7;color:#850a0a;line-height:18px;letter-spacing:-0.3px">IN000019</div>
<div class="g" style="left:292px;top:530px;width:79px;height:36px;background:#ffd8e7;color:#850a0a;line-height:36px;letter-spacing:0.3px">2021/06/30</div>
<div class="g" style="left:371px;top:530px;width:101px;height:18px;background:#ffd8e7;color:#850a0a;line-height:18px;letter-spacing:-0.15px">Mr. AB Green</div>
<div class="g" style="left:474px;top:530px;width:78px;height:18px;background:#ffd8e7;color:#850a0a;line-height:18px;letter-spacing:0.3px">2021/07/30</div>
<div class="g r" style="left:552px;top:530px;width:75px;height:18px;background:#ffd8e7;color:#850a0a;line-height:18px;letter-spacing:0.1px">1,150.00</div>
<div class="g r" style="left:627px;top:530px;width:83px;height:18px;background:#ffd8e7;color:#850a0a;line-height:18px;letter-spacing:0.1px">1,000.00</div>
<div class="g r" style="left:710px;top:530px;width:79px;height:18px;background:#ffd8e7;color:#850a0a;line-height:18px;letter-spacing:0.1px">150.00</div>
<div class="g r" style="left:789px;top:530px;width:64px;height:18px;background:#ffd8e7;color:#850a0a;line-height:18px;letter-spacing:0.1px">1,150.00</div>
<div class="g" style="left:853px;top:530px;width:107px;height:18px;background:#ffd8e7;color:#850a0a;line-height:18px;letter-spacing:-0.1px">D-101</div>
<div class="g r" style="left:156px;top:548px;width:31px;height:18px;background:#dcfcec;color:#0a4a7c;line-height:18px;letter-spacing:0px">56</div>
<div class="g" style="left:187px;top:548px;width:105px;height:18px;background:#dcfcec;color:#0a4a7c;line-height:18px;letter-spacing:-0.3px">IN000020</div>
<div class="g" style="left:371px;top:548px;width:101px;height:18px;background:#dcfcec;color:#0a4a7c;line-height:18px;letter-spacing:-0.15px">Mr. AB Green</div>
<div class="g" style="left:474px;top:548px;width:78px;height:18px;background:#dcfcec;color:#0a4a7c;line-height:18px;letter-spacing:0.3px">2021/07/30</div>
<div class="g r" style="left:552px;top:548px;width:75px;height:18px;background:#dcfcec;color:#0a4a7c;line-height:18px;letter-spacing:0.1px">2,875.00</div>
<div class="g r" style="left:627px;top:548px;width:83px;height:18px;background:#dcfcec;color:#0a4a7c;line-height:18px;letter-spacing:0.1px">2,500.00</div>
<div class="g r" style="left:710px;top:548px;width:79px;height:18px;background:#dcfcec;color:#0a4a7c;line-height:18px;letter-spacing:0.1px">750.00</div>
<div class="g r" style="left:789px;top:548px;width:64px;height:18px;background:#dcfcec;color:#0a4a7c;line-height:18px;letter-spacing:0.1px">2,875.00</div>
<div class="g" style="left:853px;top:548px;width:107px;height:18px;background:#dcfcec;color:#0a4a7c;line-height:18px;letter-spacing:-0.1px">A-103-2</div>
<div class="a" style="left:356px;top:268px;border-left:4px solid transparent;border-right:4px solid transparent;border-top:4px solid #c07060"></div>
<div class="a" style="left:537px;top:268px;border-left:4px solid transparent;border-right:4px solid transparent;border-top:4px solid #c07060"></div>
<div class="a" style="left:156px;top:260px;width:760px;height:17px;border:1px dotted #7ad7f0"></div>
<div class="a" style="left:148px;top:247px;border-top:4px solid transparent;border-bottom:4px solid transparent;border-left:4px solid #c8c8c8"></div>
<div class="a" style="left:148px;top:265px;border-top:4px solid transparent;border-bottom:4px solid transparent;border-left:4px solid #555"></div>
<div class="a" style="left:144px;top:636px;width:780px;height:32px;background:#f5f5f5;border-top:1px solid #c8c8c8;border-bottom:2px solid #b8b8b8"></div>
<div class="a" style="left:189px;top:639px;width:101px;height:25px;background:#fff;border:1px solid #cdcdcd;font-size:11px;line-height:24px;padding:0 3px 0 6px;color:#222;text-align:left">20</div>
<div class="a" style="left:554px;top:639px;width:71px;height:25px;background:#fff;border:1px solid #cdcdcd;font-size:11px;line-height:24px;padding:0 3px 0 6px;color:#222;text-align:right">46,575.00</div>
<div class="a" style="left:629px;top:639px;width:80px;height:25px;background:#fff;border:1px solid #cdcdcd;font-size:11px;line-height:24px;padding:0 3px 0 6px;color:#222;text-align:right">40,500.00</div>
<div class="a" style="left:712px;top:639px;width:76px;height:25px;background:#fff;border:1px solid #cdcdcd;font-size:11px;line-height:24px;padding:0 3px 0 6px;color:#222;text-align:right">6,075.00</div>
<div class="a" style="left:791px;top:639px;width:60px;height:25px;background:#fff;border:1px solid #cdcdcd;font-size:11px;line-height:24px;padding:0 3px 0 6px;color:#222;text-align:right">35,950.00</div>
<div class="menu" style="left:256px;top:274px;width:209px;height:204px"></div>
<div class="hl" style="left:259px;top:343px;width:203px;height:22px"></div>
<div class="mi" style="left:290px;top:277px">Salesperson</div>
<div class="arr" style="left:451px;top:283px;border-left-color:#000"></div>
<div class="mi" style="left:290px;top:299px">Set reporting group 1</div>
<div class="arr" style="left:451px;top:305px;border-left-color:#000"></div>
<div class="mi" style="left:290px;top:321px">Set reporting group 2</div>
<div class="mi" style="left:290px;top:343px">Documents</div>
<div class="arr" style="left:451px;top:349px;border-left-color:#fff"></div>
<div class="mi" style="left:290px;top:365px">Print</div>
<div class="arr" style="left:451px;top:371px;border-left-color:#000"></div>
<div class="mi" style="left:290px;top:387px">Others</div>
<div class="arr" style="left:451px;top:393px;border-left-color:#000"></div>
<div class="mi" style="left:290px;top:409px">Plugin action</div>
<div class="mi" style="left:290px;top:431px">Plugin mass action</div>
<div class="mi" style="left:290px;top:453px">Document links</div>
<svg class="a" style="left:264px;top:282px;" width="12" height="12" viewBox="0 0 12 12"><circle cx="6" cy="3.4" r="2.9" fill="#000"/><path d="M0.3 12 L0.3 9.6 Q0.3 7.2 2.6 6.9 L9.4 6.9 Q11.7 7.2 11.7 9.6 L11.7 12 Z" fill="#000"/><path d="M4.6 6.9 L5.4 10.6 M7.4 6.9 L6.6 10.6" stroke="#f0f0f0" stroke-width="0.9"/></svg>
<svg class="a" style="left:264px;top:302px;" width="12" height="16" viewBox="0 0 12 16"><circle cx="2" cy="2" r="1.55" fill="#000"/><circle cx="6" cy="2" r="1.55" fill="#000"/><circle cx="10" cy="2" r="1.55" fill="#000"/><circle cx="2" cy="6" r="1.55" fill="#000"/><circle cx="6" cy="6" r="1.55" fill="#000"/><circle cx="10" cy="6" r="1.55" fill="#000"/><circle cx="2" cy="10" r="1.55" fill="#000"/><circle cx="6" cy="10" r="1.55" fill="#000"/><circle cx="10" cy="10" r="1.55" fill="#000"/><circle cx="6" cy="14" r="1.55" fill="#000"/></svg>
<svg class="a" style="left:264px;top:324px;" width="12" height="16" viewBox="0 0 12 16"><circle cx="2" cy="2" r="1.55" fill="#000"/><circle cx="6" cy="2" r="1.55" fill="#000"/><circle cx="10" cy="2" r="1.55" fill="#000"/><circle cx="2" cy="6" r="1.55" fill="#000"/><circle cx="6" cy="6" r="1.55" fill="#000"/><circle cx="10" cy="6" r="1.55" fill="#000"/><circle cx="2" cy="10" r="1.55" fill="#000"/><circle cx="6" cy="10" r="1.55" fill="#000"/><circle cx="10" cy="10" r="1.55" fill="#000"/><circle cx="6" cy="14" r="1.55" fill="#000"/></svg>
<svg class="a" style="left:264px;top:347px;" width="12" height="14" viewBox="0 0 12 14"><path d="M1.2 1.8 Q1.2 0.9 2.1 0.9 L7.4 0.9 L10.9 4.4 L10.9 12.2 Q10.9 13.1 10 13.1 L2.1 13.1 Q1.2 13.1 1.2 12.2 Z" fill="none" stroke="#000" stroke-width="1.6"/><path d="M6.8 0.9 L10.9 5 L6.8 5 Z" fill="#000"/><path d="M3.3 7.5 L8.6 7.5 M3.3 10.3 L6.2 10.3" stroke="#000" stroke-width="1.4"/></svg>
<svg class="a" style="left:263px;top:370px;" width="14" height="12" viewBox="0 0 14 12"><rect x="2.7" y="0" width="7.7" height="3" fill="#000"/><rect x="2.9" y="2" width="7.3" height="1.4" fill="#444"/><rect x="0" y="3" width="13.2" height="6.2" rx="1.2" fill="#000"/><rect x="2.7" y="6.5" width="7.7" height="5.2" fill="#000"/><rect x="3.9" y="7.6" width="5.3" height="2.3" fill="#fff"/><circle cx="11" cy="5.4" r="0.6" fill="#bbb"/></svg>
<svg class="a" style="left:263px;top:412px;" width="15" height="15" viewBox="0 0 15 15"><path d="M1 3 L4.3 3 Q3.6 0 5.8 0 Q8 0 7.3 3 L10.6 3 Q11.4 3 11.4 3.8 L11.4 6.9 Q14.4 6.3 14.4 8.6 Q14.4 10.9 11.4 10.3 L11.4 13.6 Q11.4 14.4 10.6 14.4 L7.3 14.4 Q7.6 12.1 5.8 12.1 Q4 12.1 4.3 14.4 L1 14.4 Q0.3 14.4 0.3 13.6 L0.3 10.3 Q2.6 10.6 2.6 8.6 Q2.6 6.6 0.3 6.9 L0.3 3.8 Q0.3 3 1 3 Z" fill="#000"/></svg>
<svg class="a" style="left:263px;top:434px;" width="15" height="15" viewBox="0 0 15 15"><path d="M1 3 L4.3 3 Q3.6 0 5.8 0 Q8 0 7.3 3 L10.6 3 Q11.4 3 11.4 3.8 L11.4 6.9 Q14.4 6.3 14.4 8.6 Q14.4 10.9 11.4 10.3 L11.4 13.6 Q11.4 14.4 10.6 14.4 L7.3 14.4 Q7.6 12.1 5.8 12.1 Q4 12.1 4.3 14.4 L1 14.4 Q0.3 14.4 0.3 13.6 L0.3 10.3 Q2.6 10.6 2.6 8.6 Q2.6 6.6 0.3 6.9 L0.3 3.8 Q0.3 3 1 3 Z" fill="#000"/></svg>
<div class="menu" style="left:459px;top:340px;width:289px;height:294px"></div>
<div class="hl" style="left:462px;top:421px;width:283px;height:22px"></div>
<div class="mi" style="left:493px;top:343px">Copy document</div>
<div class="mi" style="left:493px;top:365px">Create purchase on default supplier 1</div>
<div class="sep" style="left:491px;top:390px;width:254px"></div>
<div class="mi" style="left:493px;top:393px">Convert invoice to order</div>
<div class="sep" style="left:491px;top:418px;width:254px"></div>
<div class="mi" style="left:493px;top:421px">Copy to</div>
<div class="arr" style="left:734px;top:427px;border-left-color:#fff"></div>
<div class="mi" style="left:493px;top:443px">Convert to credit note / supplier return</div>
<div class="mi" style="left:493px;top:465px">Redo discount on document</div>
<div class="mi" style="left:493px;top:487px">Edit account</div>
<div class="sep" style="left:491px;top:512px;width:254px"></div>
<div class="mi" style="left:493px;top:515px">Create backorders to deliver</div>
<div class="mi" style="left:493px;top:537px">Adjustment</div>
<div class="mi" style="left:493px;top:559px">Create account from document details</div>
<div class="mi" style="left:493px;top:581px">- Confirm</div>
<div class="sep" style="left:491px;top:606px;width:254px"></div>
<div class="mi" style="left:493px;top:609px">Spreadsheet import</div>
<svg class="a" style="left:463px;top:343px;" width="20" height="20" viewBox="0 0 20 20"><rect x="4.2" y="3.2" width="11" height="14" fill="#eff1f4" stroke="#dde1e6" stroke-width="0.8"/><rect x="7" y="5.6" width="1.8" height="1.8" fill="#8dbde0"/><rect x="9.6" y="5.6" width="1.6" height="1.8" fill="#8dbde0"/><rect x="11.9" y="5.6" width="1.4" height="1.8" fill="#8dbde0"/><path d="M6 9 L14 9 M6 10.8 L14 10.8 M6 12.6 L11 12.6 M6 14.4 L10 14.4 M6 16 L10 16 M8.6 8 L8.6 16.5" stroke="#c6daea" stroke-width="0.8"/><path d="M4.2 5.6 L6.5 3.2" stroke="#eab56a" stroke-width="1.4"/><path d="M13.2 4.2 L14.8 6.4" stroke="#666" stroke-width="1.3"/><circle cx="13.9" cy="15.3" r="3" fill="#eceff5" stroke="#86a8e4" stroke-width="1"/><rect x="12.6" y="14.5" width="2.6" height="1.6" fill="#9a9a9a"/></svg>
<svg class="a" style="left:467px;top:369px;" width="11" height="14" viewBox="0 0 11 14"><path d="M0.4 1.6 Q0.4 0.2 1.8 0.2 L7.2 0.2 L11 4 L11 11.9 Q11 13.3 9.6 13.3 L1.8 13.3 Q0.4 13.3 0.4 11.9 Z" fill="#000"/><path d="M6.6 1.4 L9.9 4.7 L6.6 4.7 Z" fill="#fff"/><path d="M2.6 7.3 L8.4 7.3 M2.6 10.1 L8.4 10.1" stroke="#fff" stroke-width="1.2"/></svg>
<svg class="a" style="left:467px;top:397px;" width="11" height="14" viewBox="0 0 11 14"><path d="M0.4 1.6 Q0.4 0.2 1.8 0.2 L7.2 0.2 L11 4 L11 11.9 Q11 13.3 9.6 13.3 L1.8 13.3 Q0.4 13.3 0.4 11.9 Z" fill="#000"/><path d="M6.6 1.4 L9.9 4.7 L6.6 4.7 Z" fill="#fff"/><path d="M2.6 7.3 L8.4 7.3 M2.6 10.1 L8.4 10.1" stroke="#fff" stroke-width="1.2"/></svg>
<svg class="a" style="left:467px;top:492px;" width="12" height="12" viewBox="0 0 12 12"><rect x="0" y="0" width="12" height="1" fill="#000"/><rect x="0" y="1" width="12" height="2" fill="#8e8e8e"/><rect x="0" y="3" width="12" height="1" fill="#000"/><rect x="0" y="5" width="12" height="2" fill="#2a2a2a"/><rect x="0" y="8" width="12" height="1" fill="#000"/><rect x="0" y="9" width="12" height="2" fill="#8e8e8e"/><rect x="0" y="11" width="12" height="1" fill="#000"/></svg>
<svg class="a" style="left:467px;top:519px;" width="12" height="14" viewBox="0 0 12 14"><path d="M1.2 1.8 Q1.2 0.9 2.1 0.9 L7.4 0.9 L10.9 4.4 L10.9 12.2 Q10.9 13.1 10 13.1 L2.1 13.1 Q1.2 13.1 1.2 12.2 Z" fill="none" stroke="#000" stroke-width="1.6"/><path d="M6.8 0.9 L10.9 5 L6.8 5 Z" fill="#000"/><path d="M3.3 7.5 L8.6 7.5 M3.3 10.3 L6.2 10.3" stroke="#000" stroke-width="1.4"/></svg>
<svg class="a" style="left:465px;top:587px;" width="16" height="10" viewBox="0 0 16 10"><path d="M0.8 5.4 L3.8 8.4" stroke="#000" stroke-width="1.5" fill="none"/><path d="M4.6 5.4 L7.2 8.2 L14.6 0.8" stroke="#000" stroke-width="1.5" fill="none"/><path d="M6.6 5.2 L10.4 1.4" stroke="#000" stroke-width="1.5" fill="none"/></svg>
<div class="menu" style="left:742px;top:418px;width:163px;height:138px"></div>
<div class="mi" style="left:777px;top:421px">Order</div>
<svg class="a" style="left:750px;top:425px;" width="11" height="14" viewBox="0 0 11 14"><path d="M0.4 1.6 Q0.4 0.2 1.8 0.2 L7.2 0.2 L11 4 L11 11.9 Q11 13.3 9.6 13.3 L1.8 13.3 Q0.4 13.3 0.4 11.9 Z" fill="#000"/><path d="M6.6 1.4 L9.9 4.7 L6.6 4.7 Z" fill="#fff"/><path d="M2.6 7.3 L8.4 7.3 M2.6 10.1 L8.4 10.1" stroke="#fff" stroke-width="1.2"/></svg>
<div class="mi" style="left:777px;top:443px">Purchase</div>
<svg class="a" style="left:750px;top:447px;" width="11" height="14" viewBox="0 0 11 14"><path d="M0.4 1.6 Q0.4 0.2 1.8 0.2 L7.2 0.2 L11 4 L11 11.9 Q11 13.3 9.6 13.3 L1.8 13.3 Q0.4 13.3 0.4 11.9 Z" fill="#000"/><path d="M6.6 1.4 L9.9 4.7 L6.6 4.7 Z" fill="#fff"/><path d="M2.6 7.3 L8.4 7.3 M2.6 10.1 L8.4 10.1" stroke="#fff" stroke-width="1.2"/></svg>
<div class="mi" style="left:777px;top:465px">Supplier return</div>
<svg class="a" style="left:750px;top:469px;" width="11" height="14" viewBox="0 0 11 14"><path d="M0.4 1.6 Q0.4 0.2 1.8 0.2 L7.2 0.2 L11 4 L11 11.9 Q11 13.3 9.6 13.3 L1.8 13.3 Q0.4 13.3 0.4 11.9 Z" fill="#000"/><path d="M6.6 1.4 L9.9 4.7 L6.6 4.7 Z" fill="#fff"/><path d="M2.6 7.3 L8.4 7.3 M2.6 10.1 L8.4 10.1" stroke="#fff" stroke-width="1.2"/></svg>
<div class="mi" style="left:777px;top:487px">Quote</div>
<svg class="a" style="left:750px;top:491px;" width="12" height="14" viewBox="0 0 12 14"><path d="M1.2 1.8 Q1.2 0.9 2.1 0.9 L7.4 0.9 L10.9 4.4 L10.9 12.2 Q10.9 13.1 10 13.1 L2.1 13.1 Q1.2 13.1 1.2 12.2 Z" fill="none" stroke="#000" stroke-width="1.6"/><path d="M6.8 0.9 L10.9 5 L6.8 5 Z" fill="#000"/><path d="M3.3 7.5 L8.6 7.5 M3.3 10.3 L6.2 10.3" stroke="#000" stroke-width="1.4"/></svg>
<div class="mi" style="left:777px;top:509px">Invoice</div>
<svg class="a" style="left:750px;top:513px;" width="12" height="14" viewBox="0 0 12 14"><path d="M1.2 1.8 Q1.2 0.9 2.1 0.9 L7.4 0.9 L10.9 4.4 L10.9 12.2 Q10.9 13.1 10 13.1 L2.1 13.1 Q1.2 13.1 1.2 12.2 Z" fill="none" stroke="#000" stroke-width="1.6"/><path d="M6.8 0.9 L10.9 5 L6.8 5 Z" fill="#000"/><path d="M3.3 7.5 L8.6 7.5 M3.3 10.3 L6.2 10.3" stroke="#000" stroke-width="1.4"/></svg>
<div class="mi" style="left:777px;top:531px">Credit note</div>
<svg class="a" style="left:750px;top:535px;" width="12" height="14" viewBox="0 0 12 14"><path d="M1.2 1.8 Q1.2 0.9 2.1 0.9 L7.4 0.9 L10.9 4.4 L10.9 12.2 Q10.9 13.1 10 13.1 L2.1 13.1 Q1.2 13.1 1.2 12.2 Z" fill="none" stroke="#000" stroke-width="1.6"/><path d="M6.8 0.9 L10.9 5 L6.8 5 Z" fill="#000"/><path d="M3.3 7.5 L8.6 7.5 M3.3 10.3 L6.2 10.3" stroke="#000" stroke-width="1.4"/></svg>
</body></html>
